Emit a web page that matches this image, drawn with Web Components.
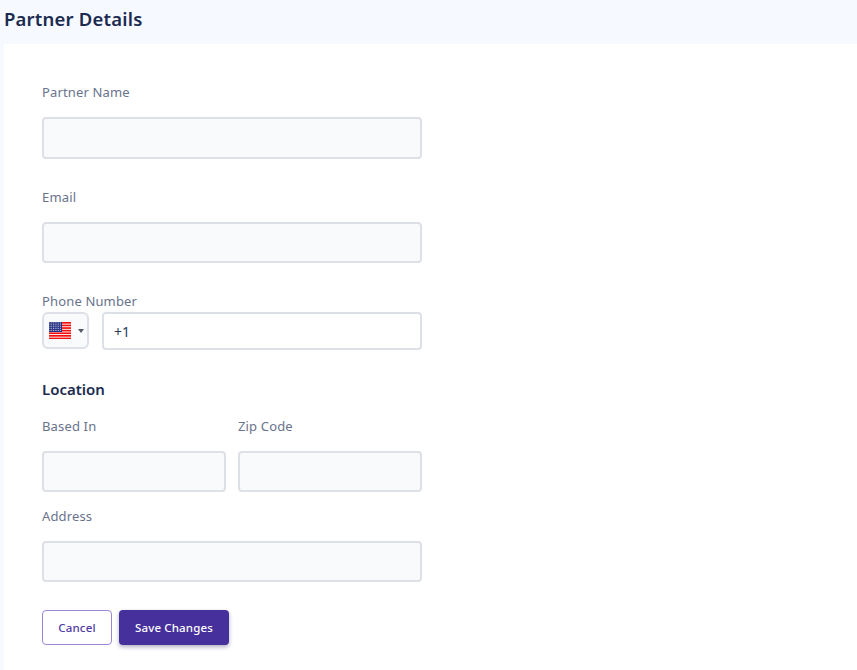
<!DOCTYPE html>
<html>
<head>
<meta charset="utf-8">
<title>Partner Details</title>
<style>
  html, body { margin: 0; padding: 0; }
  body { background: #f6f9ff; font-family: "Noto Sans", "Liberation Sans", sans-serif; }
</style>
</head>
<body>
<partner-page heading="Partner Details">
  <form-field label="Partner Name" gap="15" after="28"><text-box></text-box></form-field>
  <form-field label="Email" gap="15" after="28"><text-box h="41"></text-box></form-field>
  <form-field label="Phone Number" gap="1" after="29"><phone-box code="+1"></phone-box></form-field>
  <section-title>Location</section-title>
  <form-row>
    <form-field label="Based In" gap="15" after="14"><text-box h="41"></text-box></form-field>
    <form-field label="Zip Code" gap="15" after="14"><text-box h="41"></text-box></form-field>
  </form-row>
  <form-field label="Address" gap="15" after="28"><text-box h="41"></text-box></form-field>
  <form-actions>
    <form-btn kind="outline">Cancel</form-btn>
    <form-btn kind="solid">Save Changes</form-btn>
  </form-actions>
</partner-page>

<script>
class PartnerPage extends HTMLElement {
  constructor() {
    super();
    const shadow = this.attachShadow({ mode: 'open' });
    shadow.innerHTML = `
      <style>
        :host { display: block; min-height: 670px; background: #f6f9ff; color: #1b2b4f; }
        .top { height: 44px; display: flex; align-items: center; padding: 0 0 7px 4px; box-sizing: border-box; }
        h1 { margin: 0; font-size: 18.5px; font-weight: 600; line-height: 30px; color: #1b2b4f; letter-spacing: .2px; }
        .card { margin-left: 4px; background: #fff; padding: 38px 0 25px 38px; min-height: 563px; }
        .inner { width: 380px; display: flex; flex-direction: column; }
      </style>
      <div class="top"><h1></h1></div>
      <div class="card"><div class="inner"><slot></slot></div></div>
    `;
    shadow.querySelector('h1').textContent = this.getAttribute('heading');
  }
}

class FormField extends HTMLElement {
  constructor() {
    super();
    const shadow = this.attachShadow({ mode: 'open' });
    shadow.innerHTML = `
      <style>
        :host { display: block; min-width: 0; }
        label { display: block; font-size: 13px; line-height: 20px; color: #69738c; letter-spacing: .15px; }
      </style>
      <label></label>
      <slot></slot>
    `;
    shadow.querySelector('label').textContent = this.getAttribute('label');
    shadow.querySelector('label').style.marginBottom = this.getAttribute('gap') + 'px';
    this.style.marginBottom = this.getAttribute('after') + 'px';
  }
}

class FormRow extends HTMLElement {
  constructor() {
    super();
    this.attachShadow({ mode: 'open' }).innerHTML = `
      <style>
        :host { display: grid; grid-template-columns: 184px 184px; column-gap: 12px; }
      </style>
      <slot></slot>
    `;
  }
}

class TextBox extends HTMLElement {
  constructor() {
    super();
    const shadow = this.attachShadow({ mode: 'open' });
    shadow.innerHTML = `
      <style>
        :host { display: block; }
        input {
          display: block; width: 100%; height: 42px; box-sizing: border-box; margin: 0;
          background: #f9fafc; border: 2px solid #dde0e6; border-radius: 4px; outline: none;
        }
      </style>
      <input type="text">
    `;
    if (this.getAttribute('h')) shadow.querySelector('input').style.height = this.getAttribute('h') + 'px';
  }
}

class UsFlag extends HTMLElement {
  constructor() {
    super();
    let stripes = '';
    for (let i = 0; i < 7; i++) {
      stripes += `<rect x="0" y="${i * 2.6}" width="22" height="1.7" fill="#f40f0f"/>`;
    }
    let dots = '';
    for (let r = 0; r < 5; r++) {
      for (let c = 0; c < 7; c++) {
        dots += `<rect x="${0.5 + c * 1.75}" y="${0.5 + r * 1.9}" width="0.9" height="0.9" fill="#d8dcf0"/>`;
      }
    }
    this.attachShadow({ mode: 'open' }).innerHTML = `
      <style>:host { display: block; width: 22px; height: 17px; } svg { display: block; }</style>
      <svg width="22" height="17" viewBox="0 0 22 17">
        <rect width="22" height="17" fill="#fff"/>
        ${stripes}
        <rect width="13" height="10" fill="#252f80"/>
        ${dots}
      </svg>
    `;
  }
}

class PhoneBox extends HTMLElement {
  constructor() {
    super();
    const shadow = this.attachShadow({ mode: 'open' });
    shadow.innerHTML = `
      <style>
        :host { display: flex; gap: 13px; align-items: flex-start; }
        .pick {
          width: 47px; height: 37px; box-sizing: border-box; flex: none;
          display: flex; align-items: center; padding-left: 5px; gap: 7px;
          background: #f9fafc; border: 2px solid #dde0e6; border-radius: 6px;
        }
        .caret { width: 0; height: 0; border-left: 3px solid transparent; border-right: 3px solid transparent; border-top: 4px solid #55596a; }
        .num {
          flex: 1; height: 38px; box-sizing: border-box; display: flex; align-items: center;
          padding-left: 10px; background: #fff; border: 2px solid #dde0e6; border-radius: 4px;
          font-size: 14px; color: #2a3a5c;
        }
      </style>
      <div class="pick"><us-flag></us-flag><span class="caret"></span></div>
      <div class="num"></div>
    `;
    shadow.querySelector('.num').textContent = this.getAttribute('code');
  }
}

class SectionTitle extends HTMLElement {
  constructor() {
    super();
    this.attachShadow({ mode: 'open' }).innerHTML = `
      <style>
        :host { display: block; font-size: 15px; font-weight: 600; line-height: 20px; color: #1b2b4f; margin-bottom: 16px; padding-bottom: 1px; }
      </style>
      <slot></slot>
    `;
  }
}

class FormActions extends HTMLElement {
  constructor() {
    super();
    this.attachShadow({ mode: 'open' }).innerHTML = `
      <style>:host { display: flex; gap: 7px; }</style>
      <slot></slot>
    `;
  }
}

class FormBtn extends HTMLElement {
  constructor() {
    super();
    const shadow = this.attachShadow({ mode: 'open' });
    shadow.innerHTML = `
      <style>
        :host { display: block; }
        button {
          display: block; height: 35px; box-sizing: border-box; margin: 0; cursor: pointer;
          font: 500 11.5px "Noto Sans", "Liberation Sans", sans-serif; letter-spacing: .15px; border-radius: 4px;
        }
        .outline { width: 70px; background: #fff; color: #4f3aa6; border: 1px solid #9b87d6; }
        .solid { width: 110px; background: #46309c; color: #fff; border: none; box-shadow: 0 2px 4px rgba(30, 20, 80, .35); }
      </style>
      <button><slot></slot></button>
    `;
    shadow.querySelector('button').className = this.getAttribute('kind');
  }
}

customElements.define('partner-page', PartnerPage);
customElements.define('form-field', FormField);
customElements.define('form-row', FormRow);
customElements.define('text-box', TextBox);
customElements.define('us-flag', UsFlag);
customElements.define('phone-box', PhoneBox);
customElements.define('section-title', SectionTitle);
customElements.define('form-actions', FormActions);
customElements.define('form-btn', FormBtn);
</script>
</body>
</html>
